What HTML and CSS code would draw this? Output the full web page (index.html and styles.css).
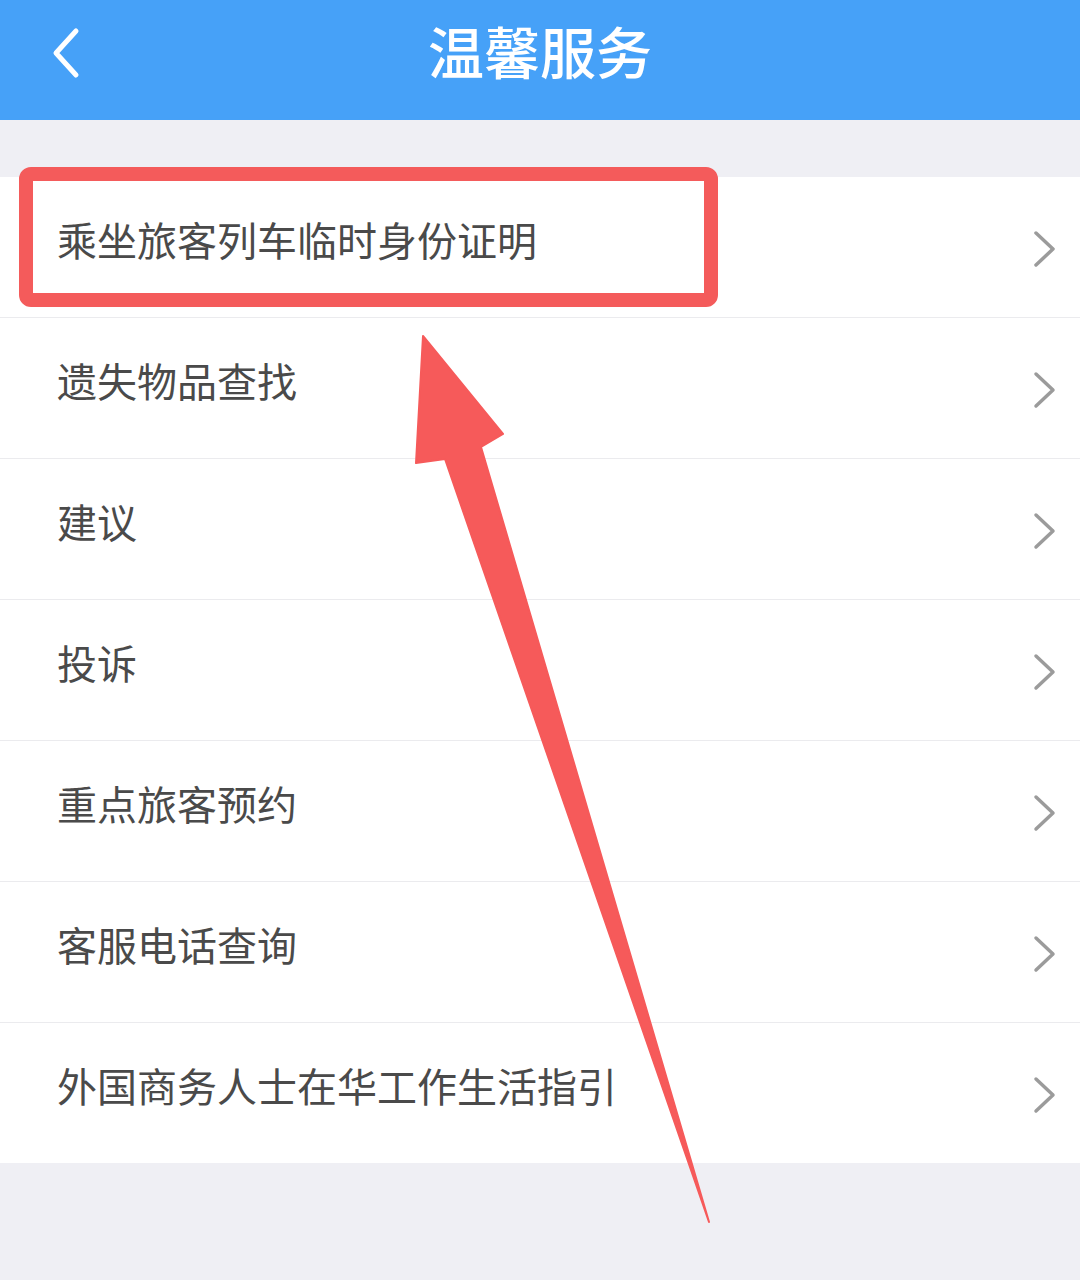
FILE: index.html
```html
<!DOCTYPE html>
<html lang="zh-CN">
<head>
<meta charset="utf-8">
<title>温馨服务</title>
<link rel="stylesheet" href="styles.css">
</head>
<body>
<div class="page">
  <header class="topbar">
    <svg class="back" width="40" height="56" viewBox="0 0 40 56"><path d="M30 6 L10 28 L30 50" fill="none" stroke="#fff" stroke-width="5" stroke-linecap="round" stroke-linejoin="round"/></svg>
    <h1 class="title">温馨服务</h1>
  </header>
  <ul class="list">
    <li class="row"><span class="label">乘坐旅客列车临时身份证明</span><svg class="chev" width="26" height="40" viewBox="0 0 26 40"><path d="M4 4 L21 20 L4 36" fill="none" stroke="#9b9b9b" stroke-width="3.5" stroke-linecap="round" stroke-linejoin="round"/></svg></li>
    <li class="row"><span class="label">遗失物品查找</span><svg class="chev" width="26" height="40" viewBox="0 0 26 40"><path d="M4 4 L21 20 L4 36" fill="none" stroke="#9b9b9b" stroke-width="3.5" stroke-linecap="round" stroke-linejoin="round"/></svg></li>
    <li class="row"><span class="label">建议</span><svg class="chev" width="26" height="40" viewBox="0 0 26 40"><path d="M4 4 L21 20 L4 36" fill="none" stroke="#9b9b9b" stroke-width="3.5" stroke-linecap="round" stroke-linejoin="round"/></svg></li>
    <li class="row"><span class="label">投诉</span><svg class="chev" width="26" height="40" viewBox="0 0 26 40"><path d="M4 4 L21 20 L4 36" fill="none" stroke="#9b9b9b" stroke-width="3.5" stroke-linecap="round" stroke-linejoin="round"/></svg></li>
    <li class="row"><span class="label">重点旅客预约</span><svg class="chev" width="26" height="40" viewBox="0 0 26 40"><path d="M4 4 L21 20 L4 36" fill="none" stroke="#9b9b9b" stroke-width="3.5" stroke-linecap="round" stroke-linejoin="round"/></svg></li>
    <li class="row"><span class="label">客服电话查询</span><svg class="chev" width="26" height="40" viewBox="0 0 26 40"><path d="M4 4 L21 20 L4 36" fill="none" stroke="#9b9b9b" stroke-width="3.5" stroke-linecap="round" stroke-linejoin="round"/></svg></li>
    <li class="row"><span class="label">外国商务人士在华工作生活指引</span><svg class="chev" width="26" height="40" viewBox="0 0 26 40"><path d="M4 4 L21 20 L4 36" fill="none" stroke="#9b9b9b" stroke-width="3.5" stroke-linecap="round" stroke-linejoin="round"/></svg></li>
  </ul>
  <svg class="annot" width="1080" height="1280" viewBox="0 0 1080 1280">
    <rect x="26" y="174" width="685" height="126" rx="5" fill="none" stroke="#f45b5b" stroke-width="14"/>
    <path d="M423 336 L503 434 L481 447 L709 1222 L445 459 L416 463 Z" fill="#f65a5a" stroke="#f65a5a" stroke-width="2" stroke-linejoin="round"/>
  </svg>
</div>
</body>
</html>
```

FILE: styles.css
```css
html, body {
  margin: 0;
  padding: 0;
  background: #efeff4;
}
.page {
  position: relative;
  width: 1080px;
  height: 1280px;
  background: #efeff4;
  font-family: "Noto Sans CJK SC", "Noto Sans", sans-serif;
  overflow: hidden;
}
.topbar {
  height: 120px;
  background: #46a1f8;
  display: flex;
  align-items: center;
  justify-content: center;
  position: relative;
}
.back {
  position: absolute;
  left: 46px;
  top: 25px;
}
.title {
  margin: 0;
  color: #fff;
  font-size: 56px;
  font-weight: 500;
  line-height: 1;
  margin-top: -20px;
  letter-spacing: 0;
}
.list {
  list-style: none;
  margin: 57px 0 0 0;
  padding: 0;
  background: #fff;
}
.row {
  height: 140px;
  display: flex;
  align-items: center;
  justify-content: space-between;
  padding: 0 22px 0 57px;
  border-top: 1px solid #ebebee;
}
.row:first-child {
  border-top: none;
}
.label {
  font-size: 40px;
  color: #4a4a4a;
  line-height: 1;
  margin-top: -16px;
}
.chev {
  margin-top: 4px;
}
.annot {
  position: absolute;
  left: 0;
  top: 0;
  pointer-events: none;
}
```
